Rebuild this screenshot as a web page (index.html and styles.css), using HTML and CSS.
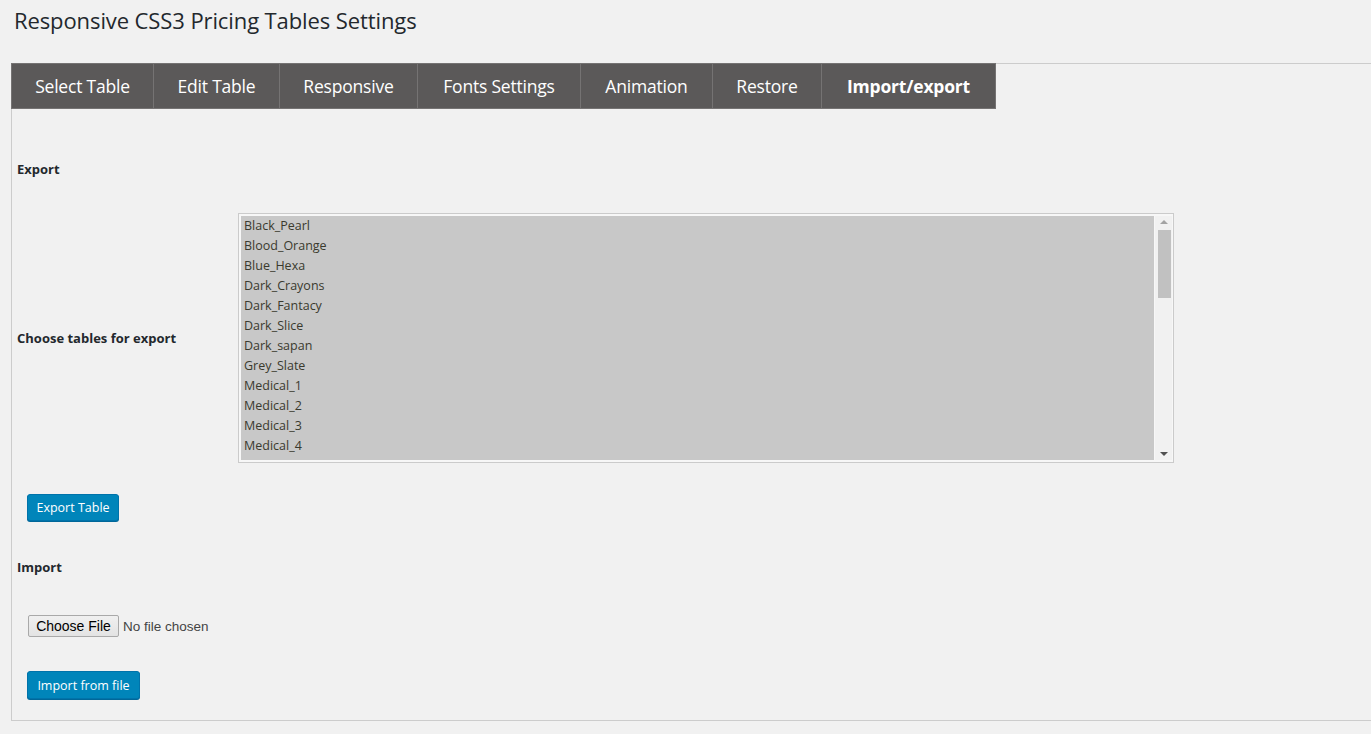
FILE: index.html
```html
<!DOCTYPE html>
<html>
<head>
<meta charset="utf-8">
<link rel="stylesheet" href="styles.css">
</head>
<body>
<div class="wrap">
  <h1 class="title">Responsive CSS3 Pricing Tables Settings</h1>
  <div class="panel">
    <div class="tabs">
      <div class="tab t1">Select Table</div>
      <div class="tab t2">Edit Table</div>
      <div class="tab t3">Responsive</div>
      <div class="tab t4">Fonts Settings</div>
      <div class="tab t5">Animation</div>
      <div class="tab t6">Restore</div>
      <div class="tab t7 active">Import/export</div>
    </div>
    <div class="content">
      <div class="heading export-h">Export</div>
      <div class="row">
        <div class="label">Choose tables for export</div>
        <div class="listbox">
          <div class="options">
            <div class="opt">Black_Pearl</div>
            <div class="opt">Blood_Orange</div>
            <div class="opt">Blue_Hexa</div>
            <div class="opt">Dark_Crayons</div>
            <div class="opt">Dark_Fantacy</div>
            <div class="opt">Dark_Slice</div>
            <div class="opt">Dark_sapan</div>
            <div class="opt">Grey_Slate</div>
            <div class="opt">Medical_1</div>
            <div class="opt">Medical_2</div>
            <div class="opt">Medical_3</div>
            <div class="opt">Medical_4</div>
            <div class="opt">Medical_5</div>
          </div>
          <div class="scrollbar">
            <div class="arrow up"></div>
            <div class="track"><div class="thumb"></div></div>
            <div class="arrow down"></div>
          </div>
        </div>
      </div>
      <div class="btn export-btn">Export Table</div>
      <div class="heading import-h">Import</div>
      <div class="file-row">
        <div class="file-btn">Choose File</div>
        <span class="file-none">No file chosen</span>
      </div>
      <div class="btn import-btn">Import from file</div>
    </div>
  </div>
</div>
</body>
</html>
```
FILE: styles.css
```css
html, body {
  margin: 0;
  padding: 0;
  background: #f1f1f1;
  font-family: "Open Sans", "Noto Sans", sans-serif;
  color: #23282d;
}
.wrap {
  padding-left: 11px;
}
.title {
  margin: 0;
  padding: 6px 0 0 3px;
  height: 63px;
  box-sizing: border-box;
  font-size: 22px;
  font-weight: 400;
  line-height: 29px;
  color: #23282d;
  letter-spacing: -0.1px;
}
.panel {
  border: 1px solid #ccc;
  border-right: none;
  box-sizing: border-box;
  height: 658px;
  position: relative;
}
.tabs {
  display: flex;
  margin-top: -1px;
  margin-left: -1px;
  height: 46px;
}
.tab {
  background: #5b5959;
  color: #fff;
  font-size: 17.5px;
  display: flex;
  align-items: center;
  justify-content: center;
  box-sizing: border-box;
  border: 1px solid #757373;
  border-left: none;
  letter-spacing: -0.2px;
}
.t1 { width: 143px; border-left: 1px solid #757373; }
.t2 { width: 126px; }
.t3 { width: 138px; }
.t4 { width: 163px; }
.t5 { width: 132px; }
.t6 { width: 109px; }
.t7 { width: 174px; }
.tab.active { font-weight: 700; }
.content {
  display: flex;
  flex-direction: column;
  align-items: flex-start;
  padding-left: 5px;
}
.heading {
  font-size: 13px;
  font-weight: 700;
  line-height: 18px;
}
.export-h { margin-top: 51px; }
.row {
  display: flex;
  align-items: center;
  margin-top: 35px;
}
.label {
  width: 221px;
  font-size: 13px;
  font-weight: 700;
  line-height: 18px;
}
.listbox {
  width: 936px;
  height: 250px;
  box-sizing: border-box;
  border: 1px solid #cbcbcb;
  background: #f7f7f7;
  padding: 2px 1px 2px 2px;
  display: flex;
  overflow: hidden;
}
.options {
  flex: 1;
  background: #c8c8c8;
  overflow: hidden;
}
.opt {
  height: 20px;
  line-height: 20px;
  font-size: 12.5px;
  padding-left: 3px;
  color: #3a3a2e;
}
.scrollbar {
  width: 17px;
  margin-left: 1px;
  display: flex;
  flex-direction: column;
  background: #f1f1f1;
}
.arrow {
  height: 14px;
  position: relative;
}
.arrow.up::after, .arrow.down::after {
  content: "";
  position: absolute;
  left: 5px;
  width: 0;
  height: 0;
  border-left: 4px solid transparent;
  border-right: 4px solid transparent;
}
.arrow.up::after {
  top: 4px;
  border-bottom: 4px solid #a3a3a3;
}
.arrow.down::after {
  top: 6px;
  border-top: 4px solid #505050;
}
.track {
  flex: 1;
  padding: 0 1px 0 3px;
}
.thumb {
  height: 68px;
  background: #c1c1c1;
}
.btn {
  background: #0085ba;
  border: 1px solid #0073aa;
  border-radius: 3px;
  box-shadow: 0 1px 0 #006799;
  color: #fff;
  font-size: 12.5px;
  line-height: 26px;
  box-sizing: border-box;
  height: 27px;
  margin-left: 10px;
  text-align: center;
}
.export-btn { margin-top: 31px; width: 92px; }
.import-h { margin-top: 37px; }
.file-row {
  margin-top: 39px;
  display: flex;
  align-items: center;
  margin-left: 11px;
  font-family: "Liberation Sans", Arial, sans-serif;
  font-size: 13.5px;
}
.file-btn {
  border: 1px solid #a9a9a9;
  background: linear-gradient(#f0f0f0, #e3e3e3);
  border-radius: 2px;
  height: 22px;
  box-sizing: border-box;
  width: 91px;
  text-align: center;
  line-height: 20px;
  color: #000;
  font-size: 14px;
}
.file-none {
  margin-left: 4px;
  color: #444;
}
.import-btn { margin-top: 34px; width: 113px; height: 28px; line-height: 27px; }
```
